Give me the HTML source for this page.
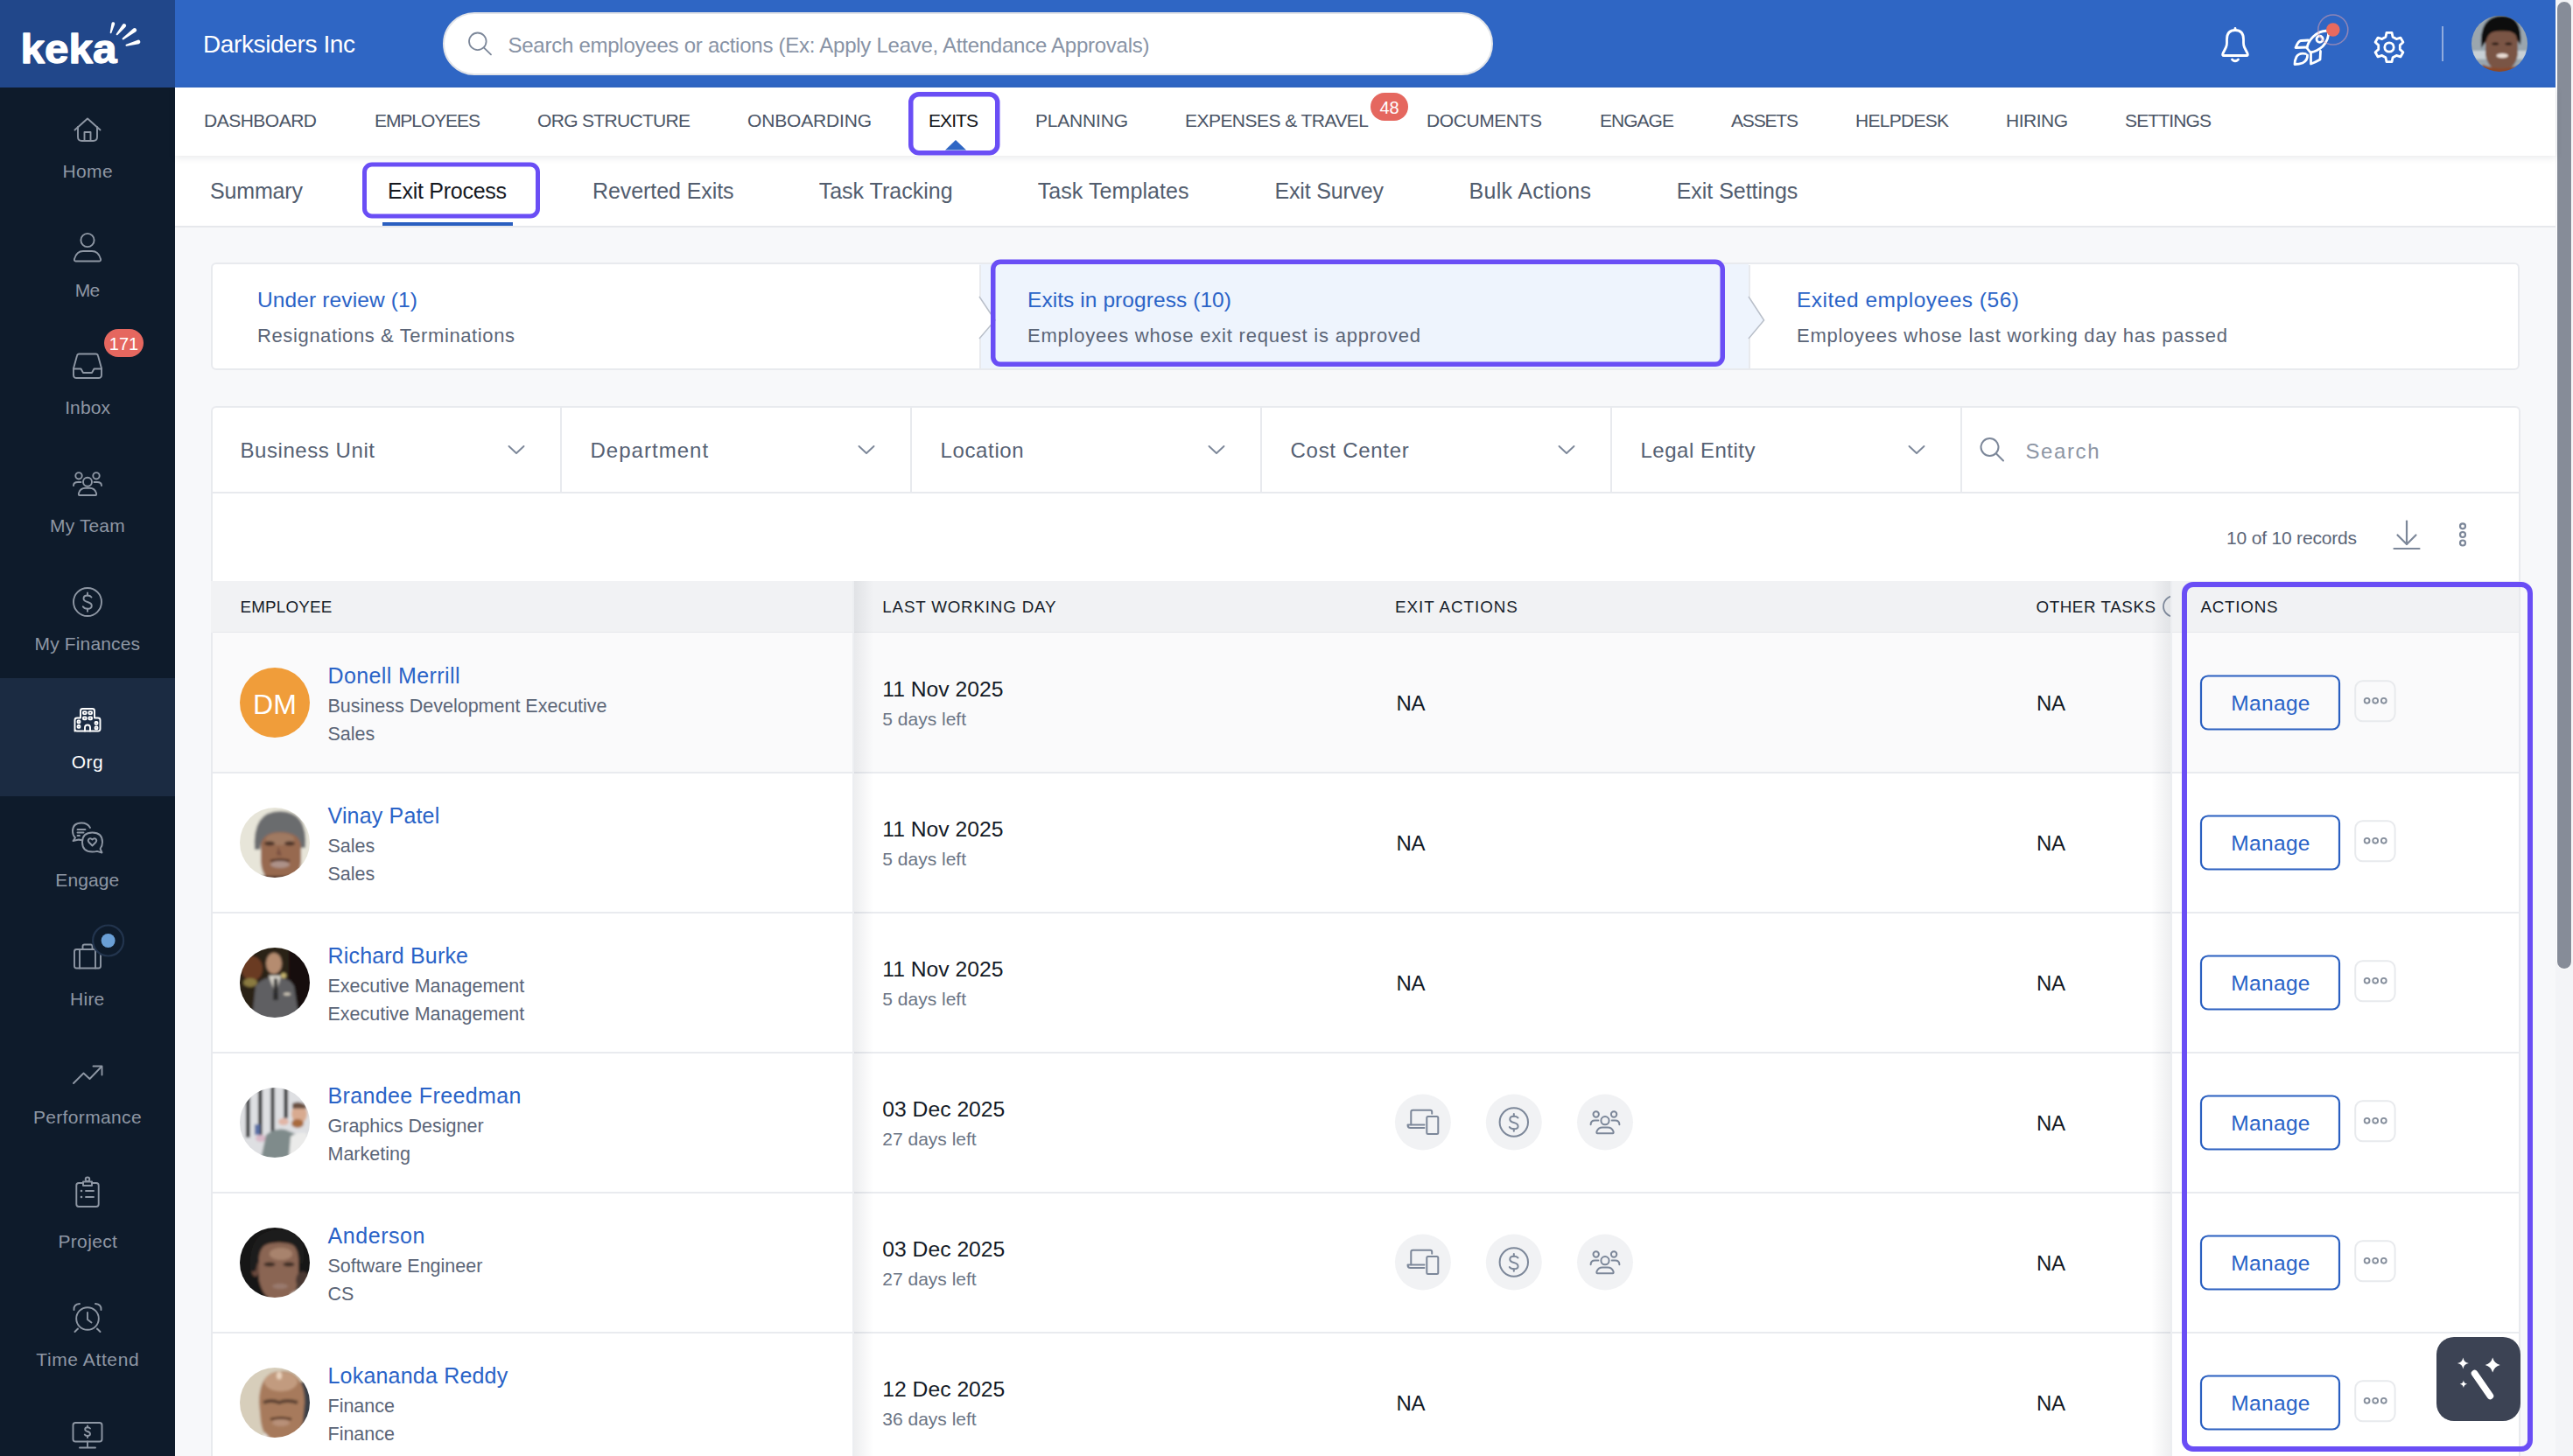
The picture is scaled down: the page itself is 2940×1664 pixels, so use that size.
<!DOCTYPE html>
<html><head><meta charset="utf-8"><style>
html,body{margin:0;padding:0;width:2940px;height:1664px;overflow:hidden;font-family:"Liberation Sans", sans-serif;}
svg text{font-family:"Liberation Sans", sans-serif;}
@media (max-width: 2000px) { html{zoom:0.5;} }
</style></head><body>
<div style="position:relative;width:2940px;height:1664px;overflow:hidden">
<div style="position:absolute;left:0px;top:0px;width:2940px;height:1664px;background:#f7f8fa"></div>
<div style="position:absolute;left:0px;top:0px;width:200px;height:1664px;background:#0e1b2b"></div>
<div style="position:absolute;left:0px;top:775px;width:200px;height:135px;background:#1b2b42"></div>
<div style="position:absolute;left:0px;top:0px;width:200px;height:100px;background:#21478a"></div>
<div style="position:absolute;left:200px;top:0px;width:2720px;height:100px;background:#2f66c4"></div>
<div style="position:absolute;left:200px;top:100px;width:2720px;height:78px;background:#fff;box-shadow:0 2px 8px rgba(20,30,50,0.10);z-index:2"></div>
<div style="position:absolute;left:200px;top:178px;width:2720px;height:82px;background:#fff;border-bottom:2px solid #e6e8ec;box-sizing:border-box"></div>
<div style="position:absolute;left:2920px;top:0px;width:20px;height:1664px;background:#f3f4f7"></div>
<div style="position:absolute;left:2921px;top:1px;width:18px;height:1107px;background:#868c98;border-radius:9px;border:1.5px solid #fff;box-sizing:border-box"></div>
<div style="position:absolute;left:506px;top:14px;width:1200px;height:72px;background:#fff;border-radius:36px;border:2px solid #e2e4e8;box-sizing:border-box"></div>
<div style="position:absolute;left:241px;top:300px;width:2638px;height:123px;background:#fff;border:2px solid #e8eaee;border-radius:6px;box-sizing:border-box"></div>
<div style="position:absolute;left:1119px;top:302px;width:879px;height:119px;background:#eef4fd"></div>
<div style="position:absolute;left:241px;top:464px;width:2639px;height:1300px;background:#fff;border:2px solid #e8eaee;border-radius:6px;box-sizing:border-box"></div>
<div style="position:absolute;left:243px;top:562px;width:2635px;height:2px;background:#e8eaee"></div>
<div style="position:absolute;left:640px;top:466px;width:2px;height:97px;background:#e8eaee"></div>
<div style="position:absolute;left:1040px;top:466px;width:2px;height:97px;background:#e8eaee"></div>
<div style="position:absolute;left:1440px;top:466px;width:2px;height:97px;background:#e8eaee"></div>
<div style="position:absolute;left:1840px;top:466px;width:2px;height:97px;background:#e8eaee"></div>
<div style="position:absolute;left:2240px;top:466px;width:2px;height:97px;background:#e8eaee"></div>
<div style="position:absolute;left:240.5px;top:664px;width:2637.5px;height:59px;background:#f1f2f4"></div>
<div style="position:absolute;left:243px;top:721.5px;width:2635px;height:2px;background:#e6e8eb"></div>
<div style="position:absolute;left:243px;top:723px;width:2635px;height:160px;background:#fafafb"></div>
<div style="position:absolute;left:243px;top:882px;width:2635px;height:2px;background:#e9ebef"></div>
<div style="position:absolute;left:243px;top:1042px;width:2635px;height:2px;background:#e9ebef"></div>
<div style="position:absolute;left:243px;top:1202px;width:2635px;height:2px;background:#e9ebef"></div>
<div style="position:absolute;left:243px;top:1362px;width:2635px;height:2px;background:#e9ebef"></div>
<div style="position:absolute;left:243px;top:1522px;width:2635px;height:2px;background:#e9ebef"></div>
<div style="position:absolute;left:243px;top:1682px;width:2635px;height:2px;background:#e9ebef"></div>
<div style="position:absolute;left:976px;top:664px;width:22px;height:1000px;background:linear-gradient(to right, rgba(20,30,50,0.075), rgba(20,30,50,0))"></div>
<div style="position:absolute;left:974px;top:664px;width:2px;height:1000px;background:#eceef1"></div>
<div style="position:absolute;left:2458px;top:664px;width:22px;height:1000px;background:linear-gradient(to left, rgba(20,30,50,0.07), rgba(20,30,50,0))"></div>
<div style="position:absolute;left:2480px;top:664px;width:2px;height:1000px;background:#eceef1"></div>
<div style="position:absolute;left:2784px;top:1528px;width:96px;height:96px;background:#3c4354;border-radius:20px;z-index:4"></div>
<svg style="position:absolute;left:0;top:0;z-index:5" width="2940" height="1664" viewBox="0 0 2940 1664">
<text x="232" y="60" font-size="28" fill="#fff" textLength="174">Darksiders Inc</text>
<text x="580.5" y="59.5" font-size="24" fill="#8893a5" textLength="733">Search employees or actions (Ex: Apply Leave, Attendance Approvals)</text>
<text x="233" y="144.8" font-size="21" fill="#4b5566" textLength="129">DASHBOARD</text>
<text x="428" y="144.8" font-size="21" fill="#4b5566" textLength="121">EMPLOYEES</text>
<text x="614" y="144.8" font-size="21" fill="#4b5566" textLength="175">ORG STRUCTURE</text>
<text x="854" y="144.8" font-size="21" fill="#4b5566" textLength="142">ONBOARDING</text>
<text x="1061" y="144.8" font-size="21" fill="#111418" textLength="57">EXITS</text>
<text x="1183" y="144.8" font-size="21" fill="#4b5566" textLength="106">PLANNING</text>
<text x="1354" y="144.8" font-size="21" fill="#4b5566" textLength="210">EXPENSES &amp; TRAVEL</text>
<text x="1630" y="144.8" font-size="21" fill="#4b5566" textLength="132">DOCUMENTS</text>
<text x="1828" y="144.8" font-size="21" fill="#4b5566" textLength="85">ENGAGE</text>
<text x="1978" y="144.8" font-size="21" fill="#4b5566" textLength="77">ASSETS</text>
<text x="2120" y="144.8" font-size="21" fill="#4b5566" textLength="107">HELPDESK</text>
<text x="2292" y="144.8" font-size="21" fill="#4b5566" textLength="71">HIRING</text>
<text x="2428" y="144.8" font-size="21" fill="#4b5566" textLength="99">SETTINGS</text>
<text x="240" y="227" font-size="25" fill="#525d6e" textLength="106.0">Summary</text>
<text x="443" y="227" font-size="25" fill="#15181e" textLength="136.0">Exit Process</text>
<text x="677" y="227" font-size="25" fill="#525d6e" textLength="161.6">Reverted Exits</text>
<text x="935.7" y="227" font-size="25" fill="#525d6e" textLength="152.9">Task Tracking</text>
<text x="1185.7" y="227" font-size="25" fill="#525d6e" textLength="172.9">Task Templates</text>
<text x="1456.6" y="227" font-size="25" fill="#525d6e" textLength="124.4">Exit Survey</text>
<text x="1678.6" y="227" font-size="25" fill="#525d6e" textLength="139.4">Bulk Actions</text>
<text x="1915.7" y="227" font-size="25" fill="#525d6e" textLength="138.6">Exit Settings</text>
<text x="294" y="351" font-size="24.5" fill="#2a63c7" textLength="183">Under review (1)</text>
<text x="294" y="391" font-size="22" fill="#5b6577" textLength="294">Resignations &amp; Terminations</text>
<text x="1174" y="351" font-size="24.5" fill="#2a63c7" textLength="233">Exits in progress (10)</text>
<text x="1174" y="391" font-size="22" fill="#5b6577" textLength="449">Employees whose exit request is approved</text>
<text x="2053" y="351" font-size="24.5" fill="#2a63c7" textLength="254">Exited employees (56)</text>
<text x="2053" y="391" font-size="22" fill="#5b6577" textLength="492">Employees whose last working day has passed</text>
<text x="274.5" y="523" font-size="24" fill="#566173" textLength="153.5">Business Unit</text>
<text x="674.5" y="523" font-size="24" fill="#566173" textLength="134.6">Department</text>
<text x="1074.5" y="523" font-size="24" fill="#566173" textLength="95.2">Location</text>
<text x="1474.5" y="523" font-size="24" fill="#566173" textLength="135.3">Cost Center</text>
<text x="1874.5" y="523" font-size="24" fill="#566173" textLength="131">Legal Entity</text>
<text x="2314.5" y="524" font-size="24" fill="#8d96a5" textLength="84">Search</text>
<text x="2544" y="622.3" font-size="21" fill="#5b6577" textLength="149">10 of 10 records</text>
<text x="274.5" y="699.7" font-size="18.8" fill="#161d2a" textLength="104.9">EMPLOYEE</text>
<text x="1008.3" y="699.7" font-size="18.8" fill="#161d2a" textLength="198.2">LAST WORKING DAY</text>
<text x="1594" y="699.7" font-size="18.8" fill="#161d2a" textLength="139.8">EXIT ACTIONS</text>
<text x="2326.5" y="699.7" font-size="18.8" fill="#161d2a" textLength="136.5">OTHER TASKS</text>
<text x="2514.4" y="699.7" font-size="18.8" fill="#161d2a" textLength="88.2">ACTIONS</text>
<text x="374.5" y="780.7" font-size="25" fill="#2a63c7" textLength="151">Donell Merrill</text>
<text x="374.5" y="813.7" font-size="21.5" fill="#5b6577" >Business Development Executive</text>
<text x="374.5" y="845.7" font-size="21.5" fill="#5b6577" >Sales</text>
<text x="1008.3" y="795.5" font-size="24.7" fill="#131a26" >11 Nov 2025</text>
<text x="1008.3" y="829.2" font-size="21" fill="#6b7585" >5 days left</text>
<text x="1595.5" y="812" font-size="24" fill="#131a26" textLength="33">NA</text>
<text x="2327" y="812" font-size="24" fill="#131a26" textLength="33">NA</text>
<text x="2549.3" y="811.8" font-size="24.5" fill="#2a63c7" textLength="90.2">Manage</text>
<text x="374.5" y="940.7" font-size="25" fill="#2a63c7" textLength="127.7">Vinay Patel</text>
<text x="374.5" y="973.7" font-size="21.5" fill="#5b6577" >Sales</text>
<text x="374.5" y="1005.7" font-size="21.5" fill="#5b6577" >Sales</text>
<text x="1008.3" y="955.5" font-size="24.7" fill="#131a26" >11 Nov 2025</text>
<text x="1008.3" y="989.2" font-size="21" fill="#6b7585" >5 days left</text>
<text x="1595.5" y="972" font-size="24" fill="#131a26" textLength="33">NA</text>
<text x="2327" y="972" font-size="24" fill="#131a26" textLength="33">NA</text>
<text x="2549.3" y="971.8" font-size="24.5" fill="#2a63c7" textLength="90.2">Manage</text>
<text x="374.5" y="1100.7" font-size="25" fill="#2a63c7" textLength="160.5">Richard Burke</text>
<text x="374.5" y="1133.7" font-size="21.5" fill="#5b6577" >Executive Management</text>
<text x="374.5" y="1165.7" font-size="21.5" fill="#5b6577" >Executive Management</text>
<text x="1008.3" y="1115.5" font-size="24.7" fill="#131a26" >11 Nov 2025</text>
<text x="1008.3" y="1149.2" font-size="21" fill="#6b7585" >5 days left</text>
<text x="1595.5" y="1132" font-size="24" fill="#131a26" textLength="33">NA</text>
<text x="2327" y="1132" font-size="24" fill="#131a26" textLength="33">NA</text>
<text x="2549.3" y="1131.8" font-size="24.5" fill="#2a63c7" textLength="90.2">Manage</text>
<text x="374.5" y="1260.7" font-size="25" fill="#2a63c7" textLength="220.8">Brandee Freedman</text>
<text x="374.5" y="1293.7" font-size="21.5" fill="#5b6577" >Graphics Designer</text>
<text x="374.5" y="1325.7" font-size="21.5" fill="#5b6577" >Marketing</text>
<text x="1008.3" y="1275.5" font-size="24.7" fill="#131a26" >03 Dec 2025</text>
<text x="1008.3" y="1309.2" font-size="21" fill="#6b7585" >27 days left</text>
<text x="2327" y="1292" font-size="24" fill="#131a26" textLength="33">NA</text>
<text x="2549.3" y="1291.8" font-size="24.5" fill="#2a63c7" textLength="90.2">Manage</text>
<text x="374.5" y="1420.7" font-size="25" fill="#2a63c7" textLength="111">Anderson</text>
<text x="374.5" y="1453.7" font-size="21.5" fill="#5b6577" >Software Engineer</text>
<text x="374.5" y="1485.7" font-size="21.5" fill="#5b6577" >CS</text>
<text x="1008.3" y="1435.5" font-size="24.7" fill="#131a26" >03 Dec 2025</text>
<text x="1008.3" y="1469.2" font-size="21" fill="#6b7585" >27 days left</text>
<text x="2327" y="1452" font-size="24" fill="#131a26" textLength="33">NA</text>
<text x="2549.3" y="1451.8" font-size="24.5" fill="#2a63c7" textLength="90.2">Manage</text>
<text x="374.5" y="1580.7" font-size="25" fill="#2a63c7" textLength="205.7">Lokananda Reddy</text>
<text x="374.5" y="1613.7" font-size="21.5" fill="#5b6577" >Finance</text>
<text x="374.5" y="1645.7" font-size="21.5" fill="#5b6577" >Finance</text>
<text x="1008.3" y="1595.5" font-size="24.7" fill="#131a26" >12 Dec 2025</text>
<text x="1008.3" y="1629.2" font-size="21" fill="#6b7585" >36 days left</text>
<text x="1595.5" y="1612" font-size="24" fill="#131a26" textLength="33">NA</text>
<text x="2327" y="1612" font-size="24" fill="#131a26" textLength="33">NA</text>
<text x="2549.3" y="1611.8" font-size="24.5" fill="#2a63c7" textLength="90.2">Manage</text>
<text x="71.4" y="203.4" font-size="21" fill="#8e97a4" textLength="57.2">Home</text>
<text x="85.7" y="338.6" font-size="21" fill="#8e97a4" textLength="28.6">Me</text>
<text x="74.2" y="473.3" font-size="21" fill="#8e97a4" textLength="51.7">Inbox</text>
<text x="57" y="607.5" font-size="21" fill="#8e97a4" textLength="85.7">My Team</text>
<text x="39.6" y="742.7" font-size="21" fill="#8e97a4" textLength="120.4">My Finances</text>
<text x="81.8" y="878" font-size="21" fill="#fff" textLength="35.9">Org</text>
<text x="63.3" y="1013" font-size="21" fill="#8e97a4" textLength="72.9">Engage</text>
<text x="80.1" y="1148.5" font-size="21" fill="#8e97a4" textLength="39.2">Hire</text>
<text x="37.9" y="1283.7" font-size="21" fill="#8e97a4" textLength="123.7">Performance</text>
<text x="66.4" y="1425.7" font-size="21" fill="#8e97a4" textLength="67.5">Project</text>
<text x="41.3" y="1560.8" font-size="21" fill="#8e97a4" textLength="117.3">Time Attend</text>
<rect x="119" y="376" width="45" height="32" rx="16" fill="#e5675f"/>
<text x="141.5" y="400" font-size="20" fill="#fff" text-anchor="middle">171</text>
<rect x="1566" y="106" width="43" height="32" rx="16" fill="#e5675f"/>
<text x="1587.5" y="129.5" font-size="20" fill="#fff" text-anchor="middle">48</text>
<g fill="none" stroke="#7c8799" stroke-width="1.8" stroke-linecap="round"><circle cx="545.8" cy="47.3" r="9.8"/><path d="M553 54.6 L561 62.4"/></g>
<text x="23.5" y="72" font-size="46.5" font-weight="bold" fill="#fff" stroke="#fff" stroke-width="1.3" stroke-linejoin="round" textLength="110" lengthAdjust="spacingAndGlyphs">keka</text>
<path d="M127.46 26.71 L125.73 37.07 A0.9 0.9 0 0 0 127.47 37.53 L131.14 27.69 A1.9 1.9 0 0 0 127.46 26.71 Z" fill="#fff"/>
<path d="M140.02 27.94 L132.83 38.77 A1.0 1.0 0 0 0 134.37 40.03 L143.58 30.86 A2.3 2.3 0 0 0 140.02 27.94 Z" fill="#fff"/>
<path d="M152.35 32.49 L140.00 43.60 A1.0 1.0 0 0 0 141.20 45.20 L155.25 36.31 A2.4 2.4 0 0 0 152.35 32.49 Z" fill="#fff"/>
<path d="M157.35 45.69 L144.13 50.84 A1.0 1.0 0 0 0 144.67 52.76 L158.65 50.31 A2.4 2.4 0 0 0 157.35 45.69 Z" fill="#fff"/>
<g fill="none" stroke="#fff" stroke-width="2.8" stroke-linecap="round" stroke-linejoin="round" transform="translate(2000 0)"><path d="M554 32.5 L554 34.5"/><path d="M541 63.5 L567 63.5 Q569 63.5 568 61 L564.5 54 Q563.5 52 563.5 49 L563.5 45 Q563.5 34.5 554 34.5 Q544.5 34.5 544.5 45 L544.5 49 Q544.5 52 543.5 54 L540 61 Q539 63.5 541 63.5 Z"/><path d="M550.5 68 Q554 71.5 557.5 68"/></g>
<g fill="none" stroke="#fff" stroke-width="2.8" stroke-linecap="round" stroke-linejoin="round"><path d="M2660.5 35.5 Q2652 34 2643 42 Q2637 48 2636 55 L2640 60 Q2648 58.5 2654 53 Q2661.5 45 2660.5 35.5 Z"/><circle cx="2650.6" cy="44.8" r="3.6"/><path d="M2637.5 46 L2629 46.5 Q2626 47 2623 54.5 L2636 54"/><path d="M2640.5 60 L2640.5 73 Q2645 71.5 2651 68 L2651.5 58.5"/><path d="M2634.5 61.5 Q2627 60 2624 65 Q2622 69 2622 73.5 Q2627 73.5 2631 72 Q2637 69 2636.5 63"/></g>
<circle cx="2665.8" cy="34" r="17" fill="none" stroke="#e9a3ab" stroke-opacity="0.5" stroke-width="1.6"/>
<circle cx="2665.8" cy="34" r="7.8" fill="#e86a5f"/>
<g fill="none" stroke="#fff" stroke-width="2.8" stroke-linecap="round" stroke-linejoin="round" stroke-width="2.5"><path d="M2726.97 37.37 L2733.03 37.37 L2734.05 42.17 L2738.22 44.58 L2742.89 43.07 L2745.91 48.31 L2742.27 51.60 L2742.27 56.40 L2745.91 59.69 L2742.89 64.93 L2738.22 63.42 L2734.05 65.83 L2733.03 70.63 L2726.97 70.63 L2725.95 65.83 L2721.78 63.42 L2717.11 64.93 L2714.09 59.69 L2717.73 56.40 L2717.73 51.60 L2714.09 48.31 L2717.11 43.07 L2721.78 44.58 L2725.95 42.17 Z"/><circle cx="2730" cy="54" r="5.2"/></g>
<rect x="2790" y="30" width="2" height="40" fill="#a9bde3" opacity="0.8"/>
<g fill="none" stroke="#8e97a4" stroke-width="1.9" stroke-linecap="round" stroke-linejoin="round"><path d="M85.5 148.5 L100 135.5 L114.5 148.5"/><path d="M89 145 V156.5 Q89 161 93.5 161 H106.5 Q111 161 111 156.5 V145"/><path d="M96.5 161 V151 H103.5 V161"/></g>
<g fill="none" stroke="#8e97a4" stroke-width="1.9" stroke-linecap="round" stroke-linejoin="round"><circle cx="100" cy="274.5" r="7.6"/><path d="M86.5 298.5 H113.5 Q115.5 298.5 115 296 Q112.5 287 105 287 H95 Q87.5 287 85 296 Q84.5 298.5 86.5 298.5 Z"/></g>
<g fill="none" stroke="#8e97a4" stroke-width="1.9" stroke-linecap="round" stroke-linejoin="round"><path d="M90.5 404.5 H109.5 Q111.5 404.5 112 406.5 L116 421 V428.5 Q116 432 112.5 432 H87.5 Q84 432 84 428.5 V421 L88 406.5 Q88.5 404.5 90.5 404.5 Z"/><path d="M84 421.5 H92.5 L95 426 H105 L107.5 421.5 H116"/></g>
<g fill="none" stroke="#8e97a4" stroke-width="1.9" stroke-linecap="round" stroke-linejoin="round"><circle cx="90" cy="543.8" r="3.7"/><circle cx="110" cy="543.8" r="3.7"/><circle cx="100" cy="550.8" r="5"/><path d="M90.8 566 H109.2 Q110.5 566 110 563.5 Q108 557.8 102.5 557.8 H97.5 Q92 557.8 90 563.5 Q89.5 566 90.8 566 Z"/><path d="M84 555 Q84 551 89 551 H92.5"/><path d="M116 555 Q116 551 111 551 H107.5"/></g>
<g fill="none" stroke="#8e97a4" stroke-width="1.9" stroke-linecap="round" stroke-linejoin="round"><circle cx="100" cy="688" r="16"/><path d="M104.5 682.5 Q103 680.5 100 680.5 Q95.5 680.5 95.5 684 Q95.5 686.8 100 688 Q104.8 689.3 104.8 692.3 Q104.8 695.8 100 695.8 Q96.3 695.8 94.8 693.3"/><path d="M100 677.5 V680.5"/><path d="M100 695.8 V698.8"/></g>
<g fill="none" stroke="#fff" stroke-width="1.9" stroke-linecap="round" stroke-linejoin="round"><path d="M85.5 835.5 V823 Q85.5 820.5 88 820.5 H92 V812.5 Q92 810 94.5 810 H105.5 Q108 810 108 812.5 V820.5 H112 Q114.5 820.5 114.5 823 V833 Q114.5 835.5 112 835.5 H88 Q85.5 835.5 85.5 833 Z"/><path d="M97 835.5 V831.5 Q97 828.5 100 828.5 Q103 828.5 103 831.5 V835.5"/><rect x="95" y="813.3" width="3.6" height="2.8" rx="0.8"/><rect x="101.4" y="813.3" width="3.6" height="2.8" rx="0.8"/><rect x="95" y="819.5" width="3.6" height="2.8" rx="0.8"/><rect x="101.4" y="819.5" width="3.6" height="2.8" rx="0.8"/><rect x="88.6" y="823.5" width="2.8" height="2.8" rx="0.8"/><rect x="88.6" y="829" width="2.8" height="2.8" rx="0.8"/><rect x="108.6" y="825" width="2.8" height="2.8" rx="0.8"/><rect x="108.6" y="830.5" width="2.8" height="2.8" rx="0.8"/></g>
<g fill="none" stroke="#8e97a4" stroke-width="1.9" stroke-linecap="round" stroke-linejoin="round" stroke-width="1.7"><path d="M103 946 Q100 940.5 93 940.5 Q83 940.5 83 950 Q83 954.5 86 957.5 L83.5 961 L90 959.5 Q91.5 960 93 960"/><path d="M88.5 948 H97.5"/><path d="M88.5 951.5 H95.5"/><path d="M88.5 955 H91"/><path d="M105.5 973.5 Q94 973.5 94 962.5 Q94 951.5 105.5 951.5 Q117 951.5 117 962.5 Q117 967 114.5 970 L116.5 974.5 L111 972.8 Q108.5 973.5 105.5 973.5 Z"/><path d="M105.5 966.5 L101.5 962.5 Q100 960.5 101.5 958.8 Q103.5 957.3 105.5 959.5 Q107.5 957.3 109.5 958.8 Q111 960.5 109.5 962.5 Z"/></g>
<g fill="none" stroke="#8e97a4" stroke-width="1.9" stroke-linecap="round" stroke-linejoin="round"><path d="M87.5 1085 H112.5 Q115 1085 115 1087.5 V1104 Q115 1106.5 112.5 1106.5 H87.5 Q85 1106.5 85 1104 V1087.5 Q85 1085 87.5 1085 Z"/><path d="M94.5 1085 V1081.5 Q94.5 1079.5 96.5 1079.5 H103.5 Q105.5 1079.5 105.5 1081.5 V1085"/><path d="M91 1085 V1106.5"/><path d="M109 1085 V1106.5"/></g>
<circle cx="123.6" cy="1075" r="17.5" fill="#0e1b2b" stroke="#22344d" stroke-width="2.2"/><circle cx="123.6" cy="1075" r="8" fill="#6a9fd6"/>
<g fill="none" stroke="#8e97a4" stroke-width="1.9" stroke-linecap="round" stroke-linejoin="round"><path d="M84 1238 L95.5 1226.5 L102.5 1233 L116 1219"/><path d="M106.5 1218.5 H116.5 V1228.5"/></g>
<g fill="none" stroke="#8e97a4" stroke-width="1.9" stroke-linecap="round" stroke-linejoin="round"><path d="M95 1352 H90 Q87.3 1352 87.3 1354.7 V1376.3 Q87.3 1379 90 1379 H110 Q112.7 1379 112.7 1376.3 V1354.7 Q112.7 1352 110 1352 H105"/><path d="M95 1355 V1350.5 H105 V1355 Z"/><circle cx="100" cy="1347.8" r="2.3"/><path d="M98 1361 H107"/><path d="M98 1368 H107"/></g><circle cx="93" cy="1361" r="1.3" fill="#8e97a4"/><circle cx="93" cy="1368" r="1.3" fill="#8e97a4"/>
<g fill="none" stroke="#8e97a4" stroke-width="1.9" stroke-linecap="round" stroke-linejoin="round"><circle cx="100" cy="1507" r="12.8"/><path d="M100 1500 V1508 L104.5 1511.5"/><path d="M84.5 1497 Q84 1490.5 91 1490"/><path d="M115.5 1497 Q116 1490.5 109 1490"/><path d="M89 1518.5 L85.5 1522"/><path d="M111 1518.5 L114.5 1522"/></g>
<g fill="none" stroke="#8e97a4" stroke-width="1.9" stroke-linecap="round" stroke-linejoin="round"><path d="M86.3 1626 H113.7 Q116.5 1626 116.5 1628.8 V1644.7 Q116.5 1647.5 113.7 1647.5 H86.3 Q83.5 1647.5 83.5 1644.7 V1628.8 Q83.5 1626 86.3 1626 Z"/><path d="M100 1647.5 V1654"/><path d="M91 1654.5 H109"/><path d="M103 1632.5 Q102 1631.3 100 1631.3 Q97.2 1631.3 97.2 1633.5 Q97.2 1635.3 100 1636 Q103 1636.8 103 1638.8 Q103 1641 100 1641 Q97.6 1641 96.8 1639.5"/><path d="M100 1629.5 V1631.3"/><path d="M100 1641 V1643"/></g>
<path d="M1080 171.5 L1092 160 L1104 171.5 Z" fill="#2f66c4"/>
<rect x="437" y="254" width="149" height="4" fill="#2a5fc0"/>
<rect x="1119" y="303" width="2" height="36" fill="#e8eaee"/><rect x="1119" y="387" width="2" height="34" fill="#e8eaee"/>
<path d="M1119 339 L1137 366 L1119 387 Z" fill="#fff"/><path d="M1119 339 L1137 366 L1119 387" fill="none" stroke="#b9bfc9" stroke-width="1.5"/>
<rect x="1998" y="303" width="2" height="36" fill="#e8eaee"/><rect x="1998" y="387" width="2" height="34" fill="#e8eaee"/>
<path d="M1998 339 L2015.6 366 L1998 387 Z" fill="#eef4fd"/><path d="M1998 339 L2015.6 366 L1998 387" fill="none" stroke="#b9bfc9" stroke-width="1.5"/>
<path d="M581.5 510 L590.0 518 L598.5 510" fill="none" stroke="#7c8799" stroke-width="1.9" stroke-linecap="round" stroke-linejoin="round"/>
<path d="M981.5 510 L990.0 518 L998.5 510" fill="none" stroke="#7c8799" stroke-width="1.9" stroke-linecap="round" stroke-linejoin="round"/>
<path d="M1381.5 510 L1390.0 518 L1398.5 510" fill="none" stroke="#7c8799" stroke-width="1.9" stroke-linecap="round" stroke-linejoin="round"/>
<path d="M1781.5 510 L1790.0 518 L1798.5 510" fill="none" stroke="#7c8799" stroke-width="1.9" stroke-linecap="round" stroke-linejoin="round"/>
<path d="M2181.5 510 L2190.0 518 L2198.5 510" fill="none" stroke="#7c8799" stroke-width="1.9" stroke-linecap="round" stroke-linejoin="round"/>
<g fill="none" stroke="#7c8799" stroke-width="2" stroke-linecap="round"><circle cx="2273.5" cy="511" r="10"/><path d="M2281 518.5 L2289 526.5"/></g>
<g fill="none" stroke="#7c8799" stroke-width="2.2" stroke-linecap="round" stroke-linejoin="round"><path d="M2750 595.5 V622"/><path d="M2739.5 611.5 L2750 622 L2760.5 611.5"/><path d="M2735.5 627 H2764.5"/><circle cx="2814" cy="601.3" r="3"/><circle cx="2814" cy="611" r="3"/><circle cx="2814" cy="620.5" r="3"/></g>
<defs><clipPath id="cInfo"><rect x="2440" y="664" width="40" height="59"/></clipPath></defs><circle cx="2483.8" cy="692.9" r="11.8" fill="none" stroke="#7c8799" stroke-width="1.8" clip-path="url(#cInfo)"/>
<rect x="2515" y="772.5" width="158" height="61" rx="8" fill="none" stroke="#2a5fc0" stroke-width="2.2"/>
<rect x="2691.2" y="778.2" width="45.4" height="46" rx="8.5" fill="none" stroke="#e8eaed" stroke-width="2"/>
<circle cx="2704.6" cy="800.8" r="2.9" fill="none" stroke="#858e9c" stroke-width="1.9"/>
<circle cx="2714.2" cy="800.8" r="2.9" fill="none" stroke="#858e9c" stroke-width="1.9"/>
<circle cx="2723.8" cy="800.8" r="2.9" fill="none" stroke="#858e9c" stroke-width="1.9"/>
<rect x="2515" y="932.5" width="158" height="61" rx="8" fill="none" stroke="#2a5fc0" stroke-width="2.2"/>
<rect x="2691.2" y="938.2" width="45.4" height="46" rx="8.5" fill="none" stroke="#e8eaed" stroke-width="2"/>
<circle cx="2704.6" cy="960.8" r="2.9" fill="none" stroke="#858e9c" stroke-width="1.9"/>
<circle cx="2714.2" cy="960.8" r="2.9" fill="none" stroke="#858e9c" stroke-width="1.9"/>
<circle cx="2723.8" cy="960.8" r="2.9" fill="none" stroke="#858e9c" stroke-width="1.9"/>
<rect x="2515" y="1092.5" width="158" height="61" rx="8" fill="none" stroke="#2a5fc0" stroke-width="2.2"/>
<rect x="2691.2" y="1098.2" width="45.4" height="46" rx="8.5" fill="none" stroke="#e8eaed" stroke-width="2"/>
<circle cx="2704.6" cy="1120.8" r="2.9" fill="none" stroke="#858e9c" stroke-width="1.9"/>
<circle cx="2714.2" cy="1120.8" r="2.9" fill="none" stroke="#858e9c" stroke-width="1.9"/>
<circle cx="2723.8" cy="1120.8" r="2.9" fill="none" stroke="#858e9c" stroke-width="1.9"/>
<rect x="2515" y="1252.5" width="158" height="61" rx="8" fill="none" stroke="#2a5fc0" stroke-width="2.2"/>
<rect x="2691.2" y="1258.2" width="45.4" height="46" rx="8.5" fill="none" stroke="#e8eaed" stroke-width="2"/>
<circle cx="2704.6" cy="1280.8" r="2.9" fill="none" stroke="#858e9c" stroke-width="1.9"/>
<circle cx="2714.2" cy="1280.8" r="2.9" fill="none" stroke="#858e9c" stroke-width="1.9"/>
<circle cx="2723.8" cy="1280.8" r="2.9" fill="none" stroke="#858e9c" stroke-width="1.9"/>
<circle cx="1625.9" cy="1282.5" r="32" fill="#f1f2f4"/>
<circle cx="1729.8" cy="1282.5" r="32" fill="#f1f2f4"/>
<circle cx="1834" cy="1282.5" r="32" fill="#f1f2f4"/>
<g fill="none" stroke="#7c8799" stroke-width="2" stroke-linecap="round" stroke-linejoin="round" transform="translate(0 0.0)"><path d="M1612.3 1285.3 V1270.7 Q1612.3 1268.7 1614.3 1268.7 H1634.2 Q1636.2 1268.7 1636.2 1270.7 V1272.7"/><path d="M1627.5 1285.5 H1608.5 Q1608.5 1289 1611.5 1289 H1627.5"/><rect x="1630.3" y="1276" width="13" height="20.1" rx="1.5"/><circle cx="1729.8" cy="1282.5" r="16.2"/><path d="M1734.5 1277.5 Q1733 1275.8 1729.8 1275.8 Q1725.3 1275.8 1725.3 1279.2 Q1725.3 1281.8 1729.8 1283 Q1734.6 1284.3 1734.6 1287.2 Q1734.6 1290.2 1729.8 1290.2 Q1726.2 1290.2 1724.8 1288"/><path d="M1729.8 1273 V1275.8"/><path d="M1729.8 1290.2 V1292.8"/><circle cx="1823.7" cy="1273.5" r="3.2"/><circle cx="1844.1" cy="1273.5" r="3.2"/><circle cx="1834" cy="1280.7" r="4.6"/><path d="M1825.2 1295.3 H1842.8 Q1844 1295.3 1843.5 1293 Q1841.8 1288.5 1837 1288.5 H1831 Q1826.2 1288.5 1824.5 1293 Q1824 1295.3 1825.2 1295.3 Z"/><path d="M1817.6 1285.3 Q1817.6 1280.4 1822.5 1280.4 H1826.3"/><path d="M1850.4 1285.3 Q1850.4 1280.4 1845.5 1280.4 H1841.7"/></g>
<rect x="2515" y="1412.5" width="158" height="61" rx="8" fill="none" stroke="#2a5fc0" stroke-width="2.2"/>
<rect x="2691.2" y="1418.2" width="45.4" height="46" rx="8.5" fill="none" stroke="#e8eaed" stroke-width="2"/>
<circle cx="2704.6" cy="1440.8" r="2.9" fill="none" stroke="#858e9c" stroke-width="1.9"/>
<circle cx="2714.2" cy="1440.8" r="2.9" fill="none" stroke="#858e9c" stroke-width="1.9"/>
<circle cx="2723.8" cy="1440.8" r="2.9" fill="none" stroke="#858e9c" stroke-width="1.9"/>
<circle cx="1625.9" cy="1442.5" r="32" fill="#f1f2f4"/>
<circle cx="1729.8" cy="1442.5" r="32" fill="#f1f2f4"/>
<circle cx="1834" cy="1442.5" r="32" fill="#f1f2f4"/>
<g fill="none" stroke="#7c8799" stroke-width="2" stroke-linecap="round" stroke-linejoin="round" transform="translate(0 160.0)"><path d="M1612.3 1285.3 V1270.7 Q1612.3 1268.7 1614.3 1268.7 H1634.2 Q1636.2 1268.7 1636.2 1270.7 V1272.7"/><path d="M1627.5 1285.5 H1608.5 Q1608.5 1289 1611.5 1289 H1627.5"/><rect x="1630.3" y="1276" width="13" height="20.1" rx="1.5"/><circle cx="1729.8" cy="1282.5" r="16.2"/><path d="M1734.5 1277.5 Q1733 1275.8 1729.8 1275.8 Q1725.3 1275.8 1725.3 1279.2 Q1725.3 1281.8 1729.8 1283 Q1734.6 1284.3 1734.6 1287.2 Q1734.6 1290.2 1729.8 1290.2 Q1726.2 1290.2 1724.8 1288"/><path d="M1729.8 1273 V1275.8"/><path d="M1729.8 1290.2 V1292.8"/><circle cx="1823.7" cy="1273.5" r="3.2"/><circle cx="1844.1" cy="1273.5" r="3.2"/><circle cx="1834" cy="1280.7" r="4.6"/><path d="M1825.2 1295.3 H1842.8 Q1844 1295.3 1843.5 1293 Q1841.8 1288.5 1837 1288.5 H1831 Q1826.2 1288.5 1824.5 1293 Q1824 1295.3 1825.2 1295.3 Z"/><path d="M1817.6 1285.3 Q1817.6 1280.4 1822.5 1280.4 H1826.3"/><path d="M1850.4 1285.3 Q1850.4 1280.4 1845.5 1280.4 H1841.7"/></g>
<rect x="2515" y="1572.5" width="158" height="61" rx="8" fill="none" stroke="#2a5fc0" stroke-width="2.2"/>
<rect x="2691.2" y="1578.2" width="45.4" height="46" rx="8.5" fill="none" stroke="#e8eaed" stroke-width="2"/>
<circle cx="2704.6" cy="1600.8" r="2.9" fill="none" stroke="#858e9c" stroke-width="1.9"/>
<circle cx="2714.2" cy="1600.8" r="2.9" fill="none" stroke="#858e9c" stroke-width="1.9"/>
<circle cx="2723.8" cy="1600.8" r="2.9" fill="none" stroke="#858e9c" stroke-width="1.9"/>
<circle cx="314" cy="803" r="40" fill="#f09d3a"/>
<text x="314" y="815.8" font-size="32" fill="#fff" text-anchor="middle">DM</text>
<defs><clipPath id="c80"><circle cx="40" cy="40" r="40"/></clipPath><filter id="bl3" x="-30%" y="-30%" width="160%" height="160%"><feGaussianBlur stdDeviation="1.6"/></filter></defs>
<g transform="translate(274 923) scale(1.0)"><g clip-path="url(#c80)"><g filter="url(#bl3)"><rect x="-10" y="-10" width="100" height="100" fill="#e7e5d9"/><path d="M24 34 Q24 22 46 22 Q70 22 70 34 L70 62 Q68 86 46 86 Q26 86 24 62 Z" fill="#97694f"/><ellipse cx="46" cy="36" rx="16" ry="7" fill="#a07a62"/><path d="M17 48 Q14 4 46 4 Q78 4 75 46 L70 46 Q70 28 46 28 Q24 28 23 48 Z" fill="#6b6c6e"/><ellipse cx="34" cy="41" rx="6" ry="2.6" fill="#4a3228"/><ellipse cx="57" cy="41" rx="6" ry="2.6" fill="#4a3228"/><path d="M44 44 L42 54 L48 55 Z" fill="#7a5040"/><ellipse cx="46" cy="65" rx="11" ry="4" fill="#ad9289"/><path d="M35 61 Q46 58 57 61" stroke="#4a2c22" stroke-width="2.5" fill="none"/><rect x="20" y="78" width="50" height="10" fill="#4a3026"/></g></g></g>
<g transform="translate(274 1083) scale(1.0)"><g clip-path="url(#c80)"><g filter="url(#bl3)"><rect x="-10" y="-10" width="100" height="100" fill="#2c2018"/><ellipse cx="14" cy="24" rx="12" ry="14" fill="#6a3b20"/><rect x="56" y="0" width="30" height="80" fill="#14100d"/><ellipse cx="12" cy="40" rx="8" ry="5" fill="#8a7a40"/><circle cx="50" cy="32" r="3" fill="#c9b870"/><path d="M14 82 L18 44 Q24 36 34 34 L46 34 Q58 36 62 44 L68 82 Z" fill="#5f5f62"/><path d="M33 32 L47 32 L41 54 Z" fill="#d8d4cb"/><path d="M39 35 L43 35 L44 60 L38 60 Z" fill="#2a2a2b"/><ellipse cx="39" cy="18" rx="9" ry="12" fill="#b58c70"/><ellipse cx="54" cy="53" rx="4" ry="1.5" fill="#d8d0c0"/></g></g></g>
<g transform="translate(274 1243) scale(1.0)"><g clip-path="url(#c80)"><g filter="url(#bl3)"><rect x="-10" y="-10" width="100" height="100" fill="#dedfe2"/><rect x="7" y="-5" width="4.5" height="62" fill="#2b2c2e"/><rect x="21" y="-5" width="4.5" height="60" fill="#2b2c2e"/><rect x="35.5" y="-5" width="4" height="55" fill="#2b2c2e"/><rect x="50.5" y="-5" width="4.5" height="40" fill="#2b2c2e"/><rect x="17" y="42" width="6" height="12" fill="#5a6fa5"/><ellipse cx="24" cy="58" rx="6" ry="4" fill="#d9b8c8"/><path d="M24 82 L30 54 Q40 46 52 48 L66 54 L62 82 Z" fill="#7f8b8b"/><path d="M56 82 L58 56 Q66 50 76 52 L82 82 Z" fill="#ebebea"/><ellipse cx="68" cy="30" rx="9" ry="11" fill="#d8aa90"/><ellipse cx="66" cy="41" rx="7" ry="5" fill="#a86b3c"/><path d="M60 18 Q68 14 76 20 L76 24 L60 24 Z" fill="#6a5040"/><ellipse cx="50" cy="39" rx="6" ry="4" fill="#e1b5a6"/></g></g></g>
<g transform="translate(274 1403) scale(1.0)"><g clip-path="url(#c80)"><g filter="url(#bl3)"><rect x="-10" y="-10" width="100" height="100" fill="#121212"/><ellipse cx="18" cy="47" rx="5" ry="9" fill="#6a4a3c"/><path d="M22 30 Q24 17 45 17 Q66 17 67 30 L67 60 Q63 84 45 84 Q27 84 22 60 Z" fill="#8a6552"/><ellipse cx="47" cy="30" rx="13" ry="7" fill="#a8836d"/><path d="M12 50 Q8 2 46 2 Q80 4 72 44 L67 36 Q66 14 45 15 Q24 15 22 34 L18 50 Z" fill="#1d1b1a"/><ellipse cx="34" cy="42" rx="6.5" ry="2.6" fill="#3b2a22"/><ellipse cx="56" cy="42" rx="6.5" ry="2.6" fill="#3b2a22"/><ellipse cx="46" cy="67" rx="9" ry="3" fill="#9a7a6e"/><ellipse cx="72" cy="60" rx="8" ry="10" fill="#4a3832"/><path d="M58 76 L74 66 L84 84 L56 84 Z" fill="#e2ddd6"/></g></g></g>
<g transform="translate(274 1563) scale(1.0)"><g clip-path="url(#c80)"><g filter="url(#bl3)"><rect x="-10" y="-10" width="100" height="100" fill="#d7cebb"/><rect x="70" y="16" width="18" height="54" fill="#3b4047"/><path d="M22 40 Q22 4 48 4 Q74 4 74 40 L72 62 Q66 86 46 86 Q28 86 24 62 Z" fill="#a77a5c"/><ellipse cx="47" cy="16" rx="19" ry="11" fill="#c29b7f"/><ellipse cx="45" cy="9" rx="3" ry="4.5" fill="#ead3bd"/><path d="M27 40 Q36 36 45 40 Q54 36 66 40" stroke="#5a4030" stroke-width="4" fill="none"/><ellipse cx="47" cy="63" rx="10" ry="4" fill="#b89078"/><path d="M35 59 Q47 56 59 59" stroke="#4a2c1e" stroke-width="2.5" fill="none"/><path d="M24 84 L28 74 L34 80 Z" fill="#e8e4de"/><path d="M66 76 L72 68 L76 80 Z" fill="#e8e4de"/></g></g></g>
<g transform="translate(2824 18) scale(0.8)"><g clip-path="url(#c80)"><g filter="url(#bl3)"><rect x="-10" y="-10" width="100" height="100" fill="#9aa6ae"/><rect x="-10" y="50" width="100" height="12" fill="#c8d0d6"/><path d="M20 32 Q22 18 43 18 Q64 18 66 32 L66 56 Q62 78 43 78 Q24 78 20 56 Z" fill="#7a5545"/><path d="M14 46 Q10 0 44 0 Q74 0 70 42 L65 34 Q64 20 43 22 Q24 20 21 36 Z" fill="#111"/><ellipse cx="34" cy="40" rx="5" ry="2" fill="#2a1a14"/><ellipse cx="53" cy="40" rx="5" ry="2" fill="#2a1a14"/><ellipse cx="44" cy="57" rx="8.5" ry="3.4" fill="#e9dcd4"/><path d="M6 84 L16 70 Q43 80 70 70 L80 84 Z" fill="#8a4a2a"/></g></g></g>
<g fill="#fff"><path d="M2827.5 1569.5 L2845.5 1595.5" stroke="#fff" stroke-width="7.5" stroke-linecap="round"/><path d="M2848.2 1551.4 Q2850.0 1558.1000000000001 2856.7 1559.9 Q2850.0 1561.7 2848.2 1568.4 Q2846.3999999999996 1561.7 2839.7 1559.9 Q2846.3999999999996 1558.1000000000001 2848.2 1551.4 Z"/><path d="M2814.4 1551.5 Q2815.3 1557.1 2820.9 1558 Q2815.3 1558.9 2814.4 1564.5 Q2813.5 1558.9 2807.9 1558 Q2813.5 1557.1 2814.4 1551.5 Z"/><path d="M2814.9 1577.4 Q2815.5 1581.1000000000001 2819.2000000000003 1581.7 Q2815.5 1582.3 2814.9 1586.0 Q2814.3 1582.3 2810.6 1581.7 Q2814.3 1581.1000000000001 2814.9 1577.4 Z"/></g>
<rect x="1040.75" y="107.75" width="99.0" height="67.0" rx="9.25" fill="none" stroke="#6a4ef5" stroke-width="5.5"/>
<rect x="416.5" y="188.0" width="198" height="59" rx="8.5" fill="none" stroke="#6a4ef5" stroke-width="5"/>
<rect x="1134.75" y="299.25" width="833.5" height="117.0" rx="8.25" fill="none" stroke="#6a4ef5" stroke-width="5.5"/>
<rect x="2496.0" y="668.0" width="395" height="988" rx="10.0" fill="none" stroke="#6a4ef5" stroke-width="6"/>
</svg>
</div>
</body></html>
